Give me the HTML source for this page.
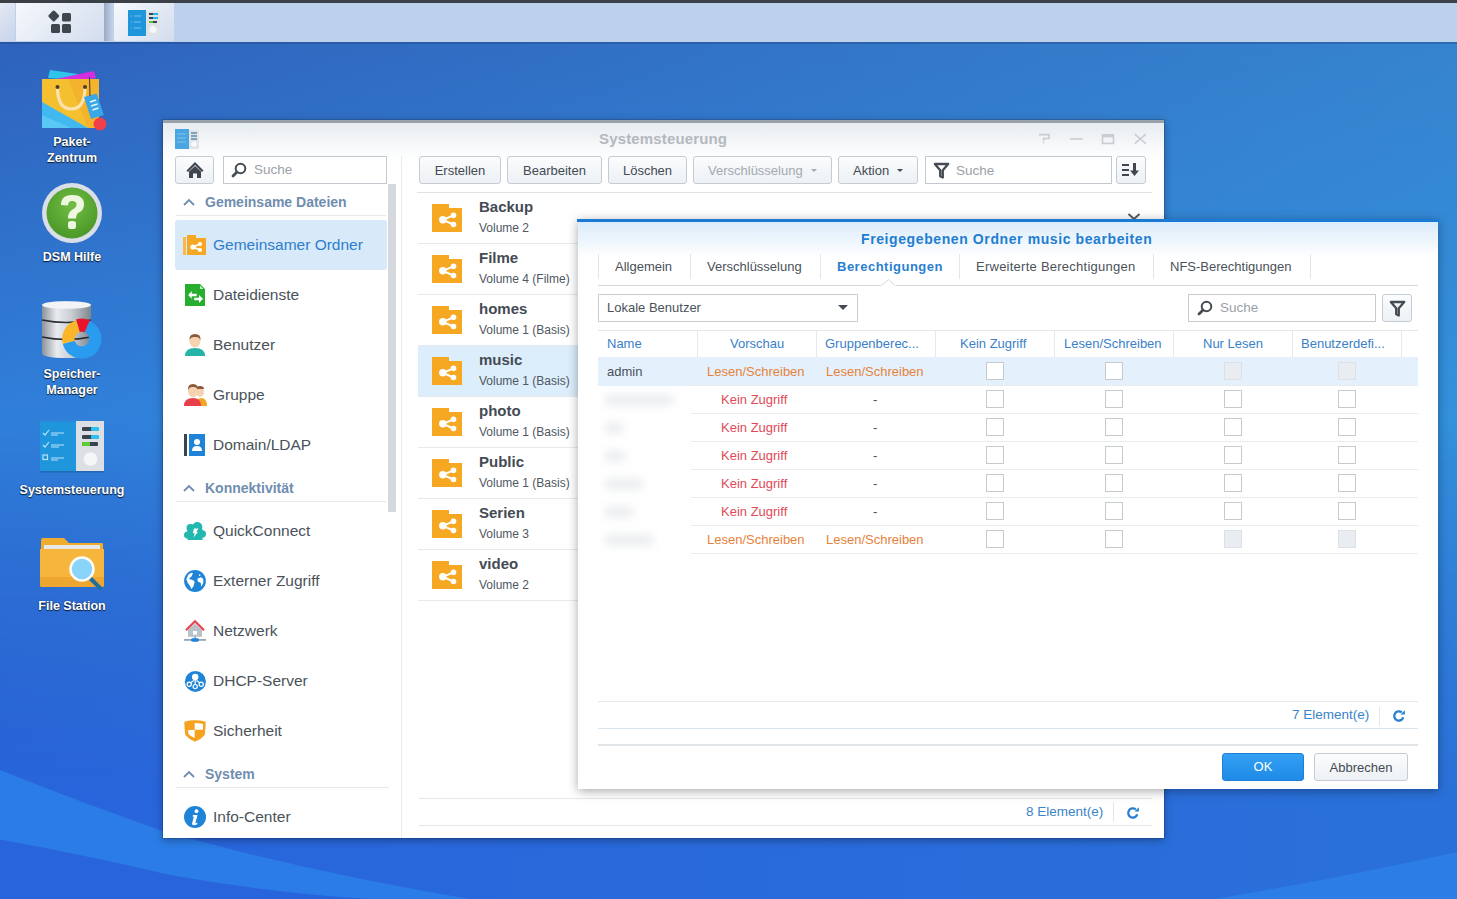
<!DOCTYPE html>
<html><head><meta charset="utf-8">
<style>
*{box-sizing:border-box;margin:0;padding:0}
html,body{width:1457px;height:899px;overflow:hidden}
body{position:relative;font-family:"Liberation Sans",sans-serif;background:#3168c2}
.a{position:absolute}
#bg{position:absolute;left:0;top:0}
/* taskbar */
#tb{left:0;top:0;width:1457px;height:42px;background:#bdd0ec;border-top:3px solid #3b4046}
.tbb{top:3px;height:38px;background:linear-gradient(135deg,#f6f8fc,#d3ddee)}
/* desktop icons */
.dl{color:#fff;font-size:12.5px;font-weight:bold;text-align:center;width:120px;line-height:16px;text-shadow:0 1px 1px rgba(0,0,0,.75),0 0 2px rgba(0,0,0,.4)}
/* windows */
#win{left:163px;top:120px;width:1001px;height:718px;background:#fff;border-top:3px solid #9aa1ab;box-shadow:0 0 0 1px rgba(10,30,70,.18),0 2px 8px rgba(0,0,0,.35)}
#dlg{left:578px;top:219px;width:860px;height:570px;background:#fff;border-top:3px solid #1a7ad4;box-shadow:0 2px 10px rgba(0,0,0,.35)}

.t{position:absolute;white-space:nowrap;line-height:1}
.btn{position:absolute;height:28px;border:1px solid #c6ccd4;border-radius:3px;background:linear-gradient(#fbfcfd,#edf1f5);color:#434a52;font-size:13px;text-align:center;line-height:28px;white-space:nowrap}
.inp{position:absolute;height:28px;border:1px solid #c4c9cf;background:#fff}
.sb{font-size:15.5px;color:#4b525a}
.sh{font-size:14px;font-weight:bold;color:#6f8daf}
.chev{position:absolute;width:12px;height:8px}
.hl{position:absolute;height:1px;background:#e6eaee}
.ft{font-size:15px;font-weight:bold;color:#444b53}
.fs{font-size:12px;color:#50575f}

.tab{position:absolute;top:260px;font-size:13px;color:#4b525a;white-space:nowrap;line-height:1}
.tsep{position:absolute;top:254px;width:1px;height:25px;background:#e3e6ea}
.th{position:absolute;top:337px;font-size:13px;color:#3a7fc8;white-space:nowrap;line-height:1}
.hsep{position:absolute;top:331px;width:1px;height:26px;background:#e6e9ed}
.cb{position:absolute;width:18px;height:18px;border:1px solid #c5cace;background:#fff}
.cbd{background:#e9ecf0;border-color:#dde1e5}
.rt{position:absolute;font-size:13px;white-space:nowrap;line-height:1}
.or{color:#e8823a}.rd{color:#e04a58}
</style></head><body>
<svg id="bg" width="1457" height="899" viewBox="0 0 1457 899">
<defs>
<linearGradient id="gA" x1="0" y1="0" x2="1" y2="0"><stop offset="0" stop-color="#2f63bd"/><stop offset="1" stop-color="#3684d0"/></linearGradient>
<linearGradient id="gB" x1="0" y1="0" x2="1" y2="0"><stop offset="0" stop-color="#3080da"/><stop offset="1" stop-color="#3391dd"/></linearGradient>
<linearGradient id="gC" x1="0" y1="0" x2="1" y2="0"><stop offset="0" stop-color="#2864dc"/><stop offset="1" stop-color="#2a70da"/></linearGradient>
<linearGradient id="mB" x1="0" y1="0" x2="0" y2="1"><stop offset="0.05" stop-color="#fff" stop-opacity="0"/><stop offset="0.47" stop-color="#fff" stop-opacity="1"/><stop offset="0.9" stop-color="#fff" stop-opacity="0"/></linearGradient>
<linearGradient id="mC" x1="0" y1="0" x2="0" y2="1"><stop offset="0.47" stop-color="#fff" stop-opacity="0"/><stop offset="0.9" stop-color="#fff" stop-opacity="1"/></linearGradient>
<mask id="kB"><rect width="1457" height="899" fill="url(#mB)"/></mask>
<mask id="kC"><rect width="1457" height="899" fill="url(#mC)"/></mask>
</defs>
<rect width="1457" height="899" fill="url(#gA)"/>
<rect width="1457" height="899" fill="url(#gB)" mask="url(#kB)"/>
<rect width="1457" height="899" fill="url(#gC)" mask="url(#kC)"/>
<path d="M0 770 Q85 804 163 831 Q300 870 470 899 L0 899 Z" fill="#2b7ce6"/>
<path d="M0 839.5 Q85 855 170 875 Q270 893 370 899 L0 899 Z" fill="#2864dc"/>
<path d="M1215 899 Q1340 878 1457 852 L1457 899 Z" fill="#2c7ee6"/>
<rect x="0" y="42" width="1457" height="2" fill="#1d3f78" opacity="0.35"/>
</svg>

<div id="tb" class="a"></div>
<div class="a tbb" style="left:0;width:15px;background:linear-gradient(135deg,#e3e9f4,#c8d4ea)"></div>
<div class="a tbb" style="left:16px;width:88px"></div>
<div class="a" style="left:104px;top:3px;width:9px;height:38px;background:linear-gradient(90deg,#9aaac6,#c4d2ea)"></div>
<div class="a tbb" style="left:114px;width:60px"></div>


<!-- taskbar icons -->
<svg class="a" style="left:46px;top:8px" width="28" height="28" viewBox="0 0 28 28">
<rect x="3.5" y="3.8" width="8.5" height="8.5" rx="1.5" transform="rotate(45 7.75 8.05)" fill="#3f464e"/>
<rect x="16" y="5" width="9" height="8.5" rx="1.5" fill="#3f464e"/>
<rect x="5" y="16" width="9" height="9" rx="1.5" fill="#3f464e"/>
<rect x="16" y="16" width="9" height="9" rx="1.5" fill="#3f464e"/>
</svg>
<svg class="a" style="left:128px;top:10px" width="32" height="26" viewBox="0 0 32 26">
<rect x="0" y="0" width="18" height="26" fill="#1f95dc"/>
<rect x="18" y="1" width="14" height="25" fill="#dfe2e6"/>
<rect x="21" y="3" width="8" height="2" fill="#3b4550"/><rect x="25" y="3" width="5" height="2" fill="#27b4ea"/>
<rect x="21" y="7" width="8" height="2" fill="#3b4550"/><rect x="25" y="7" width="5" height="2" fill="#27b4ea"/>
<rect x="21" y="11" width="8" height="2" fill="#3b4550"/><rect x="21" y="11" width="4" height="2" fill="#5cc236"/>
<circle cx="25" cy="19.5" r="3.6" fill="#f5f6f8"/>
<g stroke="#8fd0f4" stroke-width="0.8"><path d="M3 6h1M6 6h7M3 12h1M6 12h7M3 18h1M6 18h7"/></g>
</svg>

<!-- desktop icons -->
<svg class="a" style="left:38px;top:66px" width="72" height="68" viewBox="0 0 72 68">
<path d="M10 12 L12 4 L40 8 L38 14 Z" fill="#2ec4ec"/>
<path d="M13 14 L56 5 L58 12 L15 18 Z" fill="#d42ee0"/>
<path d="M4 13 H61 V62 H4 Z" fill="#f4c030"/>
<path d="M4 36 L50 62 H4 Z" fill="#41b8ef"/>
<path d="M4 49 L33 62 H4 Z" fill="#5ac8f4"/>
<path d="M30 13 H61 V62 H50 L30 13Z" fill="#f2a72a" opacity="0.55"/>
<path d="M19.5 21 Q19.5 43 33.3 43 Q47 43 47 21" fill="none" stroke="#fbe3ae" stroke-width="3.2"/>
<circle cx="19.5" cy="21" r="2" fill="#4a3b2a"/><circle cx="47" cy="21" r="2" fill="#4a3b2a"/>
<path d="M46 31 L58.7 27.4 L65.8 49 L53 53 Z" fill="#3aa8e6"/><path d="M52 36L58 34M53 40L59.5 38M54.5 44L60.5 42" stroke="#e8f6ff" stroke-width="1.5"/>
<path d="M51.5 11 L52 30" stroke="#4a3b2a" stroke-width="1"/>
<circle cx="62" cy="58" r="6.5" fill="#f0404a"/>
</svg>
<div class="a dl" style="left:12px;top:134px;line-height:16px">Paket-<br>Zentrum</div>

<svg class="a" style="left:40px;top:181px" width="64" height="64" viewBox="0 0 64 64">
<defs><radialGradient id="gh" cx="0.5" cy="0.35" r="0.6"><stop offset="0" stop-color="#72bd44"/><stop offset="1" stop-color="#4e9a2a"/></radialGradient></defs>
<circle cx="32" cy="32" r="30" fill="#d9dee8"/>
<circle cx="32" cy="32" r="25.5" fill="url(#gh)"/>
<path d="M21 24 Q21 14 32 14 Q44 14 44 23.5 Q44 29.5 38 32 Q36 33.5 36 37.5 L28 37.5 Q28 31 32.5 28.5 Q36.5 26.5 36.5 23.5 Q36.5 20 32 20 Q28 20 28 24.5 Z" fill="#eef8e0"/>
<rect x="28" y="40" width="8" height="8" rx="2.5" fill="#eef8e0"/>
</svg>
<div class="a dl" style="left:12px;top:249px">DSM Hilfe</div>

<svg class="a" style="left:40px;top:300px" width="66" height="62" viewBox="0 0 66 62">
<defs><linearGradient id="gc" x1="0" x2="1"><stop offset="0" stop-color="#8a929a"/><stop offset="0.3" stop-color="#e9ecef"/><stop offset="0.6" stop-color="#c9ced3"/><stop offset="1" stop-color="#7d858d"/></linearGradient></defs>
<path d="M2 6 Q2 1.5 26.5 1.5 Q51 1.5 51 6 V53 Q51 58 26.5 58 Q2 58 2 53 Z" fill="url(#gc)"/>
<ellipse cx="26.5" cy="5" rx="24.5" ry="3.8" fill="#f2f4f6"/>
<path d="M2 20 Q26 25 51 20 M2 37 Q26 42 51 37" stroke="#2a2f35" stroke-width="1.6" fill="none"/>
<path d="M49.46 20.96A19.6 19.6 0 1 1 22.80 43.81L34.72 40.79A7.3 7.3 0 1 0 44.65 32.28Z" fill="#2a9cf0"/>
<path d="M22.80 43.81A19.6 19.6 0 0 1 36.40 20.16L39.79 31.98A7.3 7.3 0 0 0 34.72 40.79Z" fill="#f8b628"/>
<path d="M36.15 19.29A20.5 20.5 0 0 1 49.81 20.13L44.65 32.28A7.3 7.3 0 0 0 39.79 31.98Z" fill="#e8142c"/>
</svg>
<div class="a dl" style="left:12px;top:366px">Speicher-<br>Manager</div>

<svg class="a" style="left:40px;top:421px" width="64" height="52" viewBox="0 0 64 52">
<rect x="0" y="0.5" width="36" height="50" fill="#1f95dc"/>
<rect x="36" y="0" width="28" height="50" fill="#dcdfe3"/>
<rect x="0" y="50" width="64" height="1.5" fill="#1d4f8f" opacity="0.5"/>
<g stroke="#b9e2fa" stroke-width="1.2" fill="none"><path d="M3 12 L5 14 L9 9 M3 24 L5 26 L9 21"/><rect x="3" y="34" width="4.5" height="4.5"/><path d="M11 12h13M11 14h7M11 24h13M11 26h8M11 37h13M11 39h7"/></g>
<rect x="42" y="6" width="16" height="4" rx="1" fill="#3a4450"/><rect x="51" y="6" width="8" height="4" rx="1" fill="#2ec1ef"/>
<rect x="42" y="14" width="16" height="4" rx="1" fill="#3a4450"/><rect x="51" y="14" width="8" height="4" rx="1" fill="#2ec1ef"/>
<rect x="42" y="21" width="16" height="4" rx="1" fill="#3a4450"/><rect x="42" y="21" width="8" height="4" rx="1" fill="#5fcc33"/>
<circle cx="50.5" cy="38" r="6.8" fill="#f4f6f8"/>
</svg>
<div class="a dl" style="left:2px;top:482px;width:140px">Systemsteuerung</div>

<svg class="a" style="left:40px;top:537px" width="66" height="54" viewBox="0 0 66 54">
<path d="M1 3 Q1 1 3 1 H24 L29 6 H62 Q63 6 63 8 V50 H1 Z" fill="#f0ac2e"/>
<rect x="4" y="8" width="56" height="6" fill="#e8e8e8"/>
<path d="M0 12 H64 V48 Q64 50 62 50 H2 Q0 50 0 48 Z" fill="#f6b53c"/>
<path d="M0 40 H64 V48 Q64 50 62 50 H2 Q0 50 0 48 Z" fill="#eda630"/>
<path d="M47 38 L60 51" stroke="#206fa0" stroke-width="4" stroke-linecap="round"/>
<circle cx="42" cy="32" r="11.5" fill="#89d4f8" stroke="#fdfdf6" stroke-width="2.5"/>
</svg>
<div class="a dl" style="left:12px;top:598px">File Station</div>

<div id="win" class="a"></div>

<svg width="0" height="0" style="position:absolute">
<defs>
<symbol id="fold" viewBox="0 0 30 28"><path d="M0 0H17V4H30V28H0Z" fill="#f7a823"/><path d="M10.8 15.8L21.5 11.3M10.8 15.8L21.5 20.5" stroke="#fff" stroke-width="2"/><circle cx="10.8" cy="15.8" r="3.7" fill="#fff"/><circle cx="21.5" cy="11.3" r="2.8" fill="#fff"/><circle cx="21.5" cy="20.5" r="2.8" fill="#fff"/></symbol>
<symbol id="chev" viewBox="0 0 12 8"><path d="M1 7L6 2L11 7" fill="none" stroke="#6f8daf" stroke-width="1.8"/></symbol>
<symbol id="refr" viewBox="0 0 14 14"><path d="M11.24 8.19A4.6 4.6 0 1 1 9.76 3.48" fill="none" stroke="#2a7fd0" stroke-width="2.3"/><path d="M12.9 1.2V5.6H8.4Z" fill="#2a7fd0"/></symbol>
<symbol id="mag" viewBox="0 0 16 16"><circle cx="9.5" cy="6.5" r="4.8" fill="none" stroke="#454c54" stroke-width="2"/><path d="M6 10L2 14" stroke="#454c54" stroke-width="2.8" stroke-linecap="round"/></symbol>
</defs></svg>

<!-- main window -->
<div class="a" style="left:163px;top:123px;width:1001px;height:40px;background:linear-gradient(#e7ecf0,#fafbfc 70%,#fff)"></div>
<svg class="a" style="left:175px;top:129px" width="24" height="21" viewBox="0 0 24 21">
<rect x="0" y="0" width="14" height="20" fill="#4aa6e0"/><rect x="14" y="1" width="10" height="19" fill="#e2e5e8"/>
<path d="M16 4h6M16 7h6M16 10h6" stroke="#5d8fa8" stroke-width="1.3"/><circle cx="19" cy="15" r="2.6" fill="#fafafa"/>
<path d="M2 5h9M2 9h9M2 13h9" stroke="#8ccbf0" stroke-width="0.8"/>
</svg>
<div class="t" style="left:599px;top:131px;font-size:15px;font-weight:bold;color:#b4b9be;letter-spacing:0.15px">Systemsteuerung</div>
<svg class="a" style="left:1036px;top:131px" width="114" height="16" viewBox="0 0 114 16">
<g fill="none" stroke="#c9cdd2" stroke-width="1.6">
<path d="M3 3.6H13V7.5H7.6V9.8M7.6 10.8V12.3"/>
<path d="M34 8H46.5"/>
<rect x="66.5" y="3.8" width="11" height="8.6"/><path d="M66.5 5.2H77.5" stroke-width="2.2"/>
<path d="M98.8 3.2L109.8 12.6M109.8 3.2L98.8 12.6"/>
</g></svg>

<!-- left panel -->
<div class="btn" style="left:175px;top:156px;width:39px;height:28px"></div>
<svg class="a" style="left:185px;top:161px" width="20" height="18" viewBox="0 0 20 18"><path d="M10 1L1.5 9.5L3 11L10 4L17 11L18.5 9.5Z" fill="#3f464e"/><path d="M4 10.5L10 5L16 10.5V17H12V12.5H8V17H4Z" fill="#3f464e"/></svg>
<div class="inp" style="left:223px;top:156px;width:164px"></div>
<svg class="a" style="left:231px;top:162px" width="16" height="16"><use href="#mag"/></svg>
<div class="t" style="left:254px;top:163px;font-size:13.5px;color:#9ba1a8">Suche</div>
<div class="a" style="left:388px;top:184px;width:8px;height:328px;background:#d5d9de"></div>
<div class="a" style="left:401px;top:156px;width:1px;height:682px;background:#e8ebee"></div>

<svg class="chev" style="left:183px;top:198px"><use href="#chev"/></svg>
<div class="t sh" style="left:205px;top:195px">Gemeinsame Dateien</div>
<div class="hl" style="left:176px;top:215px;width:210px"></div>
<div class="a" style="left:175px;top:220px;width:212px;height:50px;background:#d8eafa;border-radius:3px"></div>
<svg class="a" style="left:183px;top:235px" width="24" height="21" viewBox="0 0 24 21"><path d="M0 2H3V20H0Z" fill="#f9b94a"/><path d="M4 0H13V3H23V20H4Z" fill="#f7a823"/><path d="M10 12L17 9M10 12L17 15" stroke="#fff" stroke-width="1.6"/><circle cx="10" cy="12" r="2.6" fill="#fff"/><circle cx="17" cy="9" r="2" fill="#fff"/><circle cx="17" cy="15" r="2" fill="#fff"/></svg>
<div class="t sb" style="left:213px;top:237px;color:#2e7dcc">Gemeinsamer Ordner</div>

<svg class="a" style="left:185px;top:284px" width="21" height="22" viewBox="0 0 21 22"><path d="M0 0H15L20 5V22H0Z" fill="#27ae2e"/><path d="M15 1.5L18.5 5H15Z" fill="#c8f0c8"/><path d="M3.2 11L6.7 7V9.7H11.7V12.3H6.7V14.7Z M18 14.8L14 11V13.7H9.2V16.3H14V19Z" fill="#fff"/></svg>
<div class="t sb" style="left:213px;top:287px">Dateidienste</div>

<svg class="a" style="left:184px;top:333px" width="22" height="23" viewBox="0 0 22 23"><path d="M1 23Q1 15 11 15Q21 15 21 23Z" fill="#26b3a8"/><ellipse cx="11" cy="8" rx="5.5" ry="6.5" fill="#f7d2b0"/><path d="M5.5 7Q5 1 11 1Q17 1 16.5 7Q15 3.5 11 4Q7 3.5 5.5 7Z" fill="#8a5a3a"/></svg>
<div class="t sb" style="left:213px;top:337px">Benutzer</div>

<svg class="a" style="left:184px;top:383px" width="23" height="23" viewBox="0 0 23 23"><ellipse cx="16" cy="9" rx="4" ry="5" fill="#f7d2b0"/><path d="M12 6Q12 3 16 3Q20 3 20 6Z" fill="#8a5a3a"/><path d="M12 23Q12 15 17 15Q23 15 23 23Z" fill="#f4a623"/><path d="M0 23Q0 15 9 15Q17 15 17 23Z" fill="#e8404a"/><ellipse cx="9" cy="8" rx="5" ry="6.2" fill="#f7d2b0"/><path d="M4 7Q3.5 1 9 1Q14.5 1 14 7Q12.5 3.5 9 4Q5.5 3.5 4 7Z" fill="#8a5a3a"/></svg>
<div class="t sb" style="left:213px;top:387px">Gruppe</div>

<svg class="a" style="left:184px;top:434px" width="21" height="22" viewBox="0 0 21 22"><rect x="0" y="0" width="3" height="22" fill="#3a4450"/><rect x="5" y="0" width="16" height="22" fill="#1f84d8"/><circle cx="13" cy="8" r="3" fill="#fff"/><path d="M8 17Q8 12 13 12Q18 12 18 17Z" fill="#fff"/></svg>
<div class="t sb" style="left:213px;top:437px">Domain/LDAP</div>

<svg class="chev" style="left:183px;top:484px"><use href="#chev"/></svg>
<div class="t sh" style="left:205px;top:481px">Konnektivität</div>
<div class="hl" style="left:176px;top:501px;width:210px"></div>

<svg class="a" style="left:184px;top:521px" width="22" height="20" viewBox="0 0 22 20"><g fill="#22b8b0"><circle cx="6.5" cy="7" r="4"/><circle cx="13.3" cy="6" r="5"/><circle cx="18.3" cy="13" r="3.7"/><circle cx="3.5" cy="14" r="3.5"/><rect x="3.5" y="8" width="15" height="11"/></g><path d="M10 7.5H14.5L12.3 11H14L9.5 16.5L10.8 12.3H8.8Z" fill="#fff"/></svg>
<div class="t sb" style="left:213px;top:523px">QuickConnect</div>

<svg class="a" style="left:184px;top:570px" width="22" height="22" viewBox="0 0 22 22"><circle cx="11" cy="11" r="10.9" fill="#1f84d8"/><path d="M7.3 2.7L4.3 4.7L2.3 9.3L3.7 12.7L6 16L7.3 19L9.3 16.7L10.7 12L9.3 10.3L6 9.3L5 8.3L7.3 6.7L9 3.3Z M13.3 8.7L16.7 7.3L19.3 8.7L19.3 12.7L17.3 16.7L16.7 12.7L14 11.7Z M15 4.3L16.3 4.5L16.3 6L15 6Z" fill="#fff"/></svg>
<div class="t sb" style="left:213px;top:573px">Externer Zugriff</div>

<svg class="a" style="left:184px;top:619px" width="23" height="23" viewBox="0 0 23 23"><path d="M4 11L11 4.5L18 11V17.7H4Z" fill="#b9c1c9"/><rect x="9" y="12" width="4" height="3.7" fill="#fff"/><path d="M2 11.3L11 2.3L20 11.3" fill="none" stroke="#e24652" stroke-width="2.3"/><rect x="0" y="20" width="22" height="1.8" fill="#9aa4ae"/><rect x="10.5" y="17.7" width="1.2" height="2" fill="#1f84d8"/><rect x="7" y="19.2" width="8" height="3.5" rx="1.6" fill="#1f84d8"/></svg>
<div class="t sb" style="left:213px;top:623px">Netzwerk</div>

<svg class="a" style="left:184px;top:670px" width="23" height="23" viewBox="0 0 23 23"><circle cx="11.4" cy="11.4" r="10.5" fill="#1f84d8"/><circle cx="11.2" cy="7" r="3.2" fill="#fff"/><path d="M11.2 9V14.5M10 10.5L6.5 12.8M12.4 10.5L15.9 12.8" stroke="#fff" stroke-width="1.2"/><g fill="none" stroke="#fff" stroke-width="1.2"><circle cx="5.2" cy="14.3" r="2.1"/><circle cx="11.2" cy="16.6" r="2.1"/><circle cx="17.2" cy="14.3" r="2.1"/></g></svg>
<div class="t sb" style="left:213px;top:673px">DHCP-Server</div>

<svg class="a" style="left:184px;top:719px" width="22" height="24" viewBox="0 0 22 24"><path d="M0.3 2.7Q11 0 21.7 2.7Q21.5 11 20.7 16Q17 20.5 11 22.7Q5 20.5 1.3 16Q0.5 11 0.3 2.7Z" fill="#f5a31e"/><path d="M10.7 4Q15 4.2 19 5V10.7H10.7Z M4 11H10.7V19Q6 17 4.5 15Z" fill="#fff"/></svg>
<div class="t sb" style="left:213px;top:723px">Sicherheit</div>

<svg class="chev" style="left:183px;top:770px"><use href="#chev"/></svg>
<div class="t sh" style="left:205px;top:767px">System</div>
<div class="hl" style="left:176px;top:787px;width:213px"></div>

<svg class="a" style="left:184px;top:806px" width="22" height="22" viewBox="0 0 22 22"><circle cx="11" cy="11" r="11" fill="#1f84d8"/><circle cx="12.5" cy="5.2" r="1.9" fill="#fff"/><path d="M9 9H13.5L11.5 16.5Q11.3 17.5 12.5 17L13.5 16.5L13 18.5Q10.5 19.5 8.8 19Q7.8 18.5 8.2 17L9.8 10.5L8.6 10.7Z" fill="#fff"/></svg>
<div class="t sb" style="left:213px;top:809px">Info-Center</div>

<!-- right panel toolbar -->
<div class="btn" style="left:419px;top:156px;width:82px">Erstellen</div>
<div class="btn" style="left:507px;top:156px;width:95px">Bearbeiten</div>
<div class="btn" style="left:608px;top:156px;width:79px">Löschen</div>
<div class="btn" style="left:693px;top:156px;width:139px;color:#a3a9b0;text-align:left;padding-left:14px">Verschlüsselung<span style="position:absolute;left:117px;top:12px;border-left:3.5px solid transparent;border-right:3.5px solid transparent;border-top:3.5px solid #a3a9b0"></span></div>
<div class="btn" style="left:838px;top:156px;width:80px;text-align:left;padding-left:14px">Aktion<span style="position:absolute;left:58px;top:12px;border-left:3.5px solid transparent;border-right:3.5px solid transparent;border-top:3.5px solid #434a52"></span></div>
<div class="inp" style="left:925px;top:156px;width:187px"></div>
<svg class="a" style="left:933px;top:162px" width="17" height="17" viewBox="0 0 17 17"><path d="M1.8 2H15.2L9.8 8.3V15.5L7.2 14.2V8.3Z" fill="none" stroke="#454c54" stroke-width="2.3" stroke-linejoin="round"/></svg>
<div class="t" style="left:956px;top:164px;font-size:13.5px;color:#9ba1a8">Suche</div>
<div class="btn" style="left:1116px;top:156px;width:30px"></div>
<svg class="a" style="left:1122px;top:163px" width="18" height="14" viewBox="0 0 18 14"><path d="M0 2H7M0 7H7M0 12H7" stroke="#3f464e" stroke-width="1.9"/><path d="M11 0H14V7.5H17L12.5 13L8 7.5H11Z" fill="#3f464e"/></svg>
<div class="hl" style="left:417px;top:192px;width:735px;background:#dde2e7"></div>

<!-- list -->
<div class="a" style="left:418px;top:346px;width:745px;height:50px;background:#dcedfb"></div>
<svg class="a" style="left:432px;top:204px" width="30" height="28"><use href="#fold"/></svg>
<div class="t ft" style="left:479px;top:199px">Backup</div>
<div class="t fs" style="left:479px;top:222px">Volume 2</div>
<div class="hl" style="left:418px;top:243px;width:745px"></div>
<svg class="a" style="left:432px;top:255px" width="30" height="28"><use href="#fold"/></svg>
<div class="t ft" style="left:479px;top:250px">Filme</div>
<div class="t fs" style="left:479px;top:273px">Volume 4 (Filme)</div>
<div class="hl" style="left:418px;top:294px;width:745px"></div>
<svg class="a" style="left:432px;top:306px" width="30" height="28"><use href="#fold"/></svg>
<div class="t ft" style="left:479px;top:301px">homes</div>
<div class="t fs" style="left:479px;top:324px">Volume 1 (Basis)</div>
<div class="hl" style="left:418px;top:345px;width:745px"></div>
<svg class="a" style="left:432px;top:357px" width="30" height="28"><use href="#fold"/></svg>
<div class="t ft" style="left:479px;top:352px">music</div>
<div class="t fs" style="left:479px;top:375px">Volume 1 (Basis)</div>
<div class="hl" style="left:418px;top:396px;width:745px"></div>
<svg class="a" style="left:432px;top:408px" width="30" height="28"><use href="#fold"/></svg>
<div class="t ft" style="left:479px;top:403px">photo</div>
<div class="t fs" style="left:479px;top:426px">Volume 1 (Basis)</div>
<div class="hl" style="left:418px;top:447px;width:745px"></div>
<svg class="a" style="left:432px;top:459px" width="30" height="28"><use href="#fold"/></svg>
<div class="t ft" style="left:479px;top:454px">Public</div>
<div class="t fs" style="left:479px;top:477px">Volume 1 (Basis)</div>
<div class="hl" style="left:418px;top:498px;width:745px"></div>
<svg class="a" style="left:432px;top:510px" width="30" height="28"><use href="#fold"/></svg>
<div class="t ft" style="left:479px;top:505px">Serien</div>
<div class="t fs" style="left:479px;top:528px">Volume 3</div>
<div class="hl" style="left:418px;top:549px;width:745px"></div>
<svg class="a" style="left:432px;top:561px" width="30" height="28"><use href="#fold"/></svg>
<div class="t ft" style="left:479px;top:556px">video</div>
<div class="t fs" style="left:479px;top:579px">Volume 2</div>
<div class="hl" style="left:418px;top:600px;width:745px"></div>

<div class="hl" style="left:419px;top:798px;width:733px;background:#e3e8ee"></div>
<div class="hl" style="left:419px;top:825px;width:733px;background:#e3e8ee"></div>
<div class="t" style="left:1026px;top:805px;font-size:13.5px;color:#3a84c8">8 Element(e)</div>
<div class="a" style="left:1113px;top:802px;width:1px;height:20px;background:#e3e7eb"></div>
<svg class="a" style="left:1126px;top:806px" width="14" height="14"><use href="#refr"/></svg>


<div id="dlg" class="a"></div>
<div class="a" style="left:578px;top:222px;width:860px;height:36px;background:linear-gradient(#dbecfb,#fff)"></div>
<svg class="a" style="left:1127px;top:212px" width="14" height="8" viewBox="0 0 14 8"><path d="M1.5 2L7 7L12.5 2" fill="none" stroke="#4a5058" stroke-width="1.8"/></svg>
<div class="a" style="left:577px;top:219px;width:862px;height:3px;background:#1a7ad4"></div>
<div class="t" style="left:861px;top:232px;font-size:14px;font-weight:bold;color:#1f7ed0;letter-spacing:0.6px">Freigegebenen Ordner music bearbeiten</div>

<div class="tsep" style="left:598px"></div>
<div class="tab" style="left:615px">Allgemein</div>
<div class="tsep" style="left:690px"></div>
<div class="tab" style="left:707px">Verschlüsselung</div>
<div class="tsep" style="left:820px"></div>
<div class="tab" style="left:837px;font-weight:bold;color:#2a7fcf;letter-spacing:0.5px">Berechtigungen</div>
<div class="tsep" style="left:959px"></div>
<div class="tab" style="left:976px;letter-spacing:0.25px">Erweiterte Berechtigungen</div>
<div class="tsep" style="left:1153px"></div>
<div class="tab" style="left:1170px">NFS-Berechtigungen</div>
<div class="tsep" style="left:1310px"></div>
<div class="a" style="left:598px;top:285px;width:820px;height:1px;background:#d3d8dd"></div>
<svg class="a" style="left:881px;top:279px" width="15" height="8" viewBox="0 0 15 8"><path d="M0 7L7.5 0.5L15 7" fill="#fff" stroke="#d3d8dd" stroke-width="1"/><rect x="0" y="6.5" width="15" height="2" fill="#fff"/></svg>

<div class="inp" style="left:598px;top:294px;width:260px;height:28px;border-color:#c7ccd1"></div>
<div class="t" style="left:607px;top:301px;font-size:13px;color:#4b525a">Lokale Benutzer</div>
<div class="a" style="left:838px;top:305px;border-left:5.5px solid transparent;border-right:5.5px solid transparent;border-top:5.5px solid #454c54"></div>
<div class="inp" style="left:1188px;top:294px;width:188px;height:28px;border-color:#c7ccd1"></div>
<svg class="a" style="left:1197px;top:300px" width="16" height="16"><use href="#mag"/></svg>
<div class="t" style="left:1220px;top:301px;font-size:13.5px;color:#9ba1a8">Suche</div>
<div class="btn" style="left:1382px;top:294px;width:30px;height:28px"></div>
<svg class="a" style="left:1389px;top:300px" width="17" height="17" viewBox="0 0 17 17"><path d="M1.8 2H15.2L9.8 8.3V15.5L7.2 14.2V8.3Z" fill="none" stroke="#454c54" stroke-width="2.3" stroke-linejoin="round"/></svg>

<div class="a" style="left:598px;top:330px;width:820px;height:1px;background:#e3e7eb"></div>
<div class="th" style="left:607px">Name</div>
<div class="hsep" style="left:697px"></div>
<div class="th" style="left:730px">Vorschau</div>
<div class="hsep" style="left:816px"></div>
<div class="th" style="left:825px">Gruppenberec...</div>
<div class="hsep" style="left:935px"></div>
<div class="th" style="left:960px">Kein Zugriff</div>
<div class="hsep" style="left:1054px"></div>
<div class="th" style="left:1064px">Lesen/Schreiben</div>
<div class="hsep" style="left:1173px"></div>
<div class="th" style="left:1203px">Nur Lesen</div>
<div class="hsep" style="left:1292px"></div>
<div class="th" style="left:1301px">Benutzerdefi...</div>
<div class="hsep" style="left:1401px"></div>
<div class="a" style="left:598px;top:357px;width:820px;height:29px;background:#e4f1fc"></div>
<div class="rt" style="left:607px;top:365px;color:#4b525a">admin</div>
<div class="rt or" style="left:707px;top:365px">Lesen/Schreiben</div>
<div class="rt or" style="left:826px;top:365px">Lesen/Schreiben</div>
<div class="cb" style="left:986px;top:362px"></div>
<div class="cb" style="left:1105px;top:362px"></div>
<div class="cb cbd" style="left:1224px;top:362px"></div>
<div class="cb cbd" style="left:1338px;top:362px"></div>
<div class="a" style="left:691px;top:385px;width:727px;height:1px;background:#e9ecef"></div>
<div class="rt rd" style="left:721px;top:393px">Kein Zugriff</div>
<div class="rt" style="left:873px;top:393px;color:#4b525a">-</div>
<div class="cb" style="left:986px;top:390px"></div>
<div class="cb" style="left:1105px;top:390px"></div>
<div class="cb" style="left:1224px;top:390px"></div>
<div class="cb" style="left:1338px;top:390px"></div>
<div class="a" style="left:604px;top:394px;width:70px;height:12px;background:#eceef0;filter:blur(4px);border-radius:6px"></div>
<div class="a" style="left:691px;top:413px;width:727px;height:1px;background:#e9ecef"></div>
<div class="rt rd" style="left:721px;top:421px">Kein Zugriff</div>
<div class="rt" style="left:873px;top:421px;color:#4b525a">-</div>
<div class="cb" style="left:986px;top:418px"></div>
<div class="cb" style="left:1105px;top:418px"></div>
<div class="cb" style="left:1224px;top:418px"></div>
<div class="cb" style="left:1338px;top:418px"></div>
<div class="a" style="left:604px;top:422px;width:20px;height:12px;background:#eceef0;filter:blur(4px);border-radius:6px"></div>
<div class="a" style="left:691px;top:441px;width:727px;height:1px;background:#e9ecef"></div>
<div class="rt rd" style="left:721px;top:449px">Kein Zugriff</div>
<div class="rt" style="left:873px;top:449px;color:#4b525a">-</div>
<div class="cb" style="left:986px;top:446px"></div>
<div class="cb" style="left:1105px;top:446px"></div>
<div class="cb" style="left:1224px;top:446px"></div>
<div class="cb" style="left:1338px;top:446px"></div>
<div class="a" style="left:604px;top:450px;width:22px;height:12px;background:#eceef0;filter:blur(4px);border-radius:6px"></div>
<div class="a" style="left:691px;top:469px;width:727px;height:1px;background:#e9ecef"></div>
<div class="rt rd" style="left:721px;top:477px">Kein Zugriff</div>
<div class="rt" style="left:873px;top:477px;color:#4b525a">-</div>
<div class="cb" style="left:986px;top:474px"></div>
<div class="cb" style="left:1105px;top:474px"></div>
<div class="cb" style="left:1224px;top:474px"></div>
<div class="cb" style="left:1338px;top:474px"></div>
<div class="a" style="left:604px;top:478px;width:40px;height:12px;background:#eceef0;filter:blur(4px);border-radius:6px"></div>
<div class="a" style="left:691px;top:497px;width:727px;height:1px;background:#e9ecef"></div>
<div class="rt rd" style="left:721px;top:505px">Kein Zugriff</div>
<div class="rt" style="left:873px;top:505px;color:#4b525a">-</div>
<div class="cb" style="left:986px;top:502px"></div>
<div class="cb" style="left:1105px;top:502px"></div>
<div class="cb" style="left:1224px;top:502px"></div>
<div class="cb" style="left:1338px;top:502px"></div>
<div class="a" style="left:604px;top:506px;width:30px;height:12px;background:#eceef0;filter:blur(4px);border-radius:6px"></div>
<div class="a" style="left:691px;top:525px;width:727px;height:1px;background:#e9ecef"></div>
<div class="rt or" style="left:707px;top:533px">Lesen/Schreiben</div>
<div class="rt or" style="left:826px;top:533px">Lesen/Schreiben</div>
<div class="cb" style="left:986px;top:530px"></div>
<div class="cb" style="left:1105px;top:530px"></div>
<div class="cb cbd" style="left:1224px;top:530px"></div>
<div class="cb cbd" style="left:1338px;top:530px"></div>
<div class="a" style="left:604px;top:534px;width:50px;height:12px;background:#eceef0;filter:blur(4px);border-radius:6px"></div>
<div class="a" style="left:691px;top:553px;width:727px;height:1px;background:#e9ecef"></div>

<div class="a" style="left:598px;top:701px;width:820px;height:1px;background:#e6e9ed"></div>
<div class="a" style="left:598px;top:728px;width:820px;height:1px;background:#dbe5ef"></div>
<div class="a" style="left:598px;top:744px;width:820px;height:2px;background:#e1e4e7"></div>
<div class="t" style="left:1292px;top:708px;font-size:13.5px;color:#3a84c8">7 Element(e)</div>
<div class="a" style="left:1379px;top:707px;width:1px;height:19px;background:#e3e7eb"></div>
<svg class="a" style="left:1392px;top:709px" width="14" height="14"><use href="#refr"/></svg>
<div class="a" style="left:1222px;top:753px;width:82px;height:28px;border-radius:3px;border:1px solid #1f7fd6;background:linear-gradient(#33a0f4,#1e8ae6);color:#fff;font-size:13px;text-align:center;line-height:26px">OK</div>
<div class="btn" style="left:1314px;top:753px;width:94px;height:28px">Abbrechen</div>

</body></html>
